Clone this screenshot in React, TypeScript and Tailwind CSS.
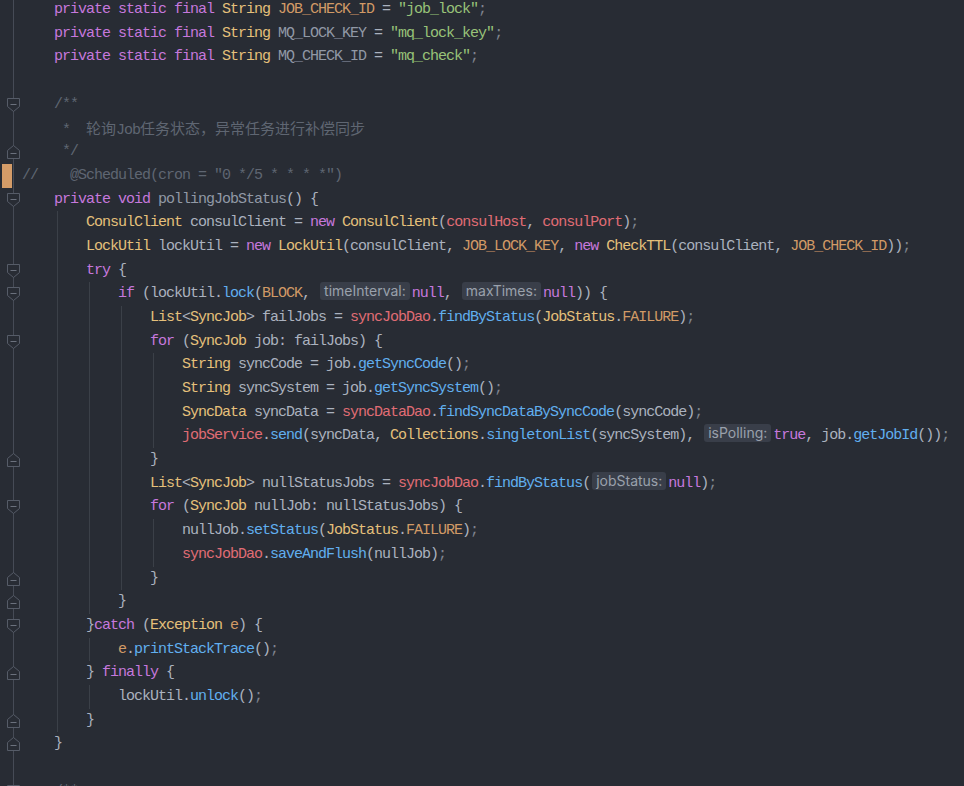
import React from "react";

type Tok = [string, string] | { hint: string } | { cjk: string };

interface Line {
    indent: number;
    body?: boolean;
    fold?: "start" | "end";
    mark?: boolean;
    toks: Tok[];
}

const kw = "text-[#c678dd]";
const ty = "text-[#e5c07b]";
const cn = "text-[#d19a66]";
const st = "text-[#98c379]";
const fd = "text-[#e06c75]";
const fn = "text-[#61afef]";
const tx = "text-[#abb2bf]";
const dm = "text-[#9199a6]";
const cm = "text-[#5f6672]";
const pu = "text-[#7f848e]";

const H = (hint: string): Tok => ({ hint });

const lines: Line[] = [
    { indent: 1, toks: [[kw, "private static final "], [ty, "String "], [cn, "JOB_CHECK_ID"], [tx, " = "], [st, '"job_lock"'], [pu, ";"]] },
    { indent: 1, toks: [[kw, "private static final "], [ty, "String "], [dm, "MQ_LOCK_KEY"], [tx, " = "], [st, '"mq_lock_key"'], [pu, ";"]] },
    { indent: 1, toks: [[kw, "private static final "], [ty, "String "], [dm, "MQ_CHECK_ID"], [tx, " = "], [st, '"mq_check"'], [pu, ";"]] },
    { indent: 0, toks: [] },
    { indent: 1, fold: "start", toks: [[cm, "/**"]] },
    { indent: 1, toks: [[cm, " *  "], { cjk: "轮询" }, [cm, "Job"], { cjk: "任务状态，异常任务进行补偿同步" }] },
    { indent: 1, fold: "end", toks: [[cm, " */"]] },
    { indent: 0, mark: true, toks: [[cm, '//    @Scheduled(cron = "0 */5 * * * *")']] },
    { indent: 1, fold: "start", toks: [[kw, "private void "], [dm, "pollingJobStatus"], [tx, "() {"]] },
    { indent: 2, body: true, toks: [[ty, "ConsulClient"], [tx, " consulClient = "], [kw, "new "], [ty, "ConsulClient"], [tx, "("], [fd, "consulHost"], [tx, ", "], [fd, "consulPort"], [tx, ")"], [pu, ";"]] },
    { indent: 2, body: true, toks: [[ty, "LockUtil"], [tx, " lockUtil = "], [kw, "new "], [ty, "LockUtil"], [tx, "(consulClient, "], [cn, "JOB_LOCK_KEY"], [tx, ", "], [kw, "new "], [ty, "CheckTTL"], [tx, "(consulClient, "], [cn, "JOB_CHECK_ID"], [tx, "))"], [pu, ";"]] },
    { indent: 2, body: true, fold: "start", toks: [[kw, "try"], [tx, " {"]] },
    { indent: 3, body: true, fold: "start", toks: [[kw, "if"], [tx, " (lockUtil."], [fn, "lock"], [tx, "("], [cn, "BLOCK"], [tx, ", "], H("timeInterval:"), [kw, "null"], [tx, ", "], H("maxTimes:"), [kw, "null"], [tx, ")) {"]] },
    { indent: 4, body: true, toks: [[ty, "List"], [tx, "<"], [ty, "SyncJob"], [tx, "> failJobs = "], [fd, "syncJobDao"], [tx, "."], [fn, "findByStatus"], [tx, "("], [ty, "JobStatus"], [tx, "."], [cn, "FAILURE"], [tx, ")"], [pu, ";"]] },
    { indent: 4, body: true, fold: "start", toks: [[kw, "for"], [tx, " ("], [ty, "SyncJob"], [tx, " job: failJobs) {"]] },
    { indent: 5, body: true, toks: [[ty, "String"], [tx, " syncCode = job."], [fn, "getSyncCode"], [tx, "()"], [pu, ";"]] },
    { indent: 5, body: true, toks: [[ty, "String"], [tx, " syncSystem = job."], [fn, "getSyncSystem"], [tx, "()"], [pu, ";"]] },
    { indent: 5, body: true, toks: [[ty, "SyncData"], [tx, " syncData = "], [fd, "syncDataDao"], [tx, "."], [fn, "findSyncDataBySyncCode"], [tx, "(syncCode)"], [pu, ";"]] },
    { indent: 5, body: true, toks: [[fd, "jobService"], [tx, "."], [fn, "send"], [tx, "(syncData, "], [ty, "Collections"], [tx, "."], [fn, "singletonList"], [tx, "(syncSystem), "], H("isPolling:"), [kw, "true"], [tx, ", job."], [fn, "getJobId"], [tx, "())"], [pu, ";"]] },
    { indent: 4, body: true, fold: "end", toks: [[tx, "}"]] },
    { indent: 4, body: true, toks: [[ty, "List"], [tx, "<"], [ty, "SyncJob"], [tx, "> nullStatusJobs = "], [fd, "syncJobDao"], [tx, "."], [fn, "findByStatus"], [tx, "("], H("jobStatus:"), [kw, "null"], [tx, ")"], [pu, ";"]] },
    { indent: 4, body: true, fold: "start", toks: [[kw, "for"], [tx, " ("], [ty, "SyncJob"], [tx, " nullJob: nullStatusJobs) {"]] },
    { indent: 5, body: true, toks: [[tx, "nullJob."], [fn, "setStatus"], [tx, "("], [ty, "JobStatus"], [tx, "."], [cn, "FAILURE"], [tx, ")"], [pu, ";"]] },
    { indent: 5, body: true, toks: [[fd, "syncJobDao"], [tx, "."], [fn, "saveAndFlush"], [tx, "(nullJob)"], [pu, ";"]] },
    { indent: 4, body: true, fold: "end", toks: [[tx, "}"]] },
    { indent: 3, body: true, fold: "end", toks: [[tx, "}"]] },
    { indent: 2, body: true, fold: "start", toks: [[tx, "}"], [kw, "catch"], [tx, " ("], [ty, "Exception"], [tx, " "], [cn, "e"], [tx, ") {"]] },
    { indent: 3, body: true, toks: [[cn, "e"], [tx, "."], [fn, "printStackTrace"], [tx, "()"], [pu, ";"]] },
    { indent: 2, body: true, fold: "end", toks: [[tx, "} "], [kw, "finally"], [tx, " {"]] },
    { indent: 3, body: true, toks: [[tx, "lockUtil."], [fn, "unlock"], [tx, "()"], [pu, ";"]] },
    { indent: 2, body: true, fold: "end", toks: [[tx, "}"]] },
    { indent: 1, fold: "end", toks: [[tx, "}"]] },
    { indent: 0, toks: [] },
    { indent: 1, fold: "start", toks: [[cm, "/**"]] },
];

const FoldIcon = ({ kind }: { kind: "start" | "end" }) => (
    <svg className="absolute left-[6px] top-[4px]" width="16" height="16" viewBox="0 0 16 16">
        {kind === "start" ? (
            <>
                <path d="M1.5 1.5H13.5V9.5L7.5 14.5L1.5 9.5Z" fill="#282c34" stroke="#565c68" />
                <path d="M4.5 7.5H10.5" stroke="#6b717d" />
            </>
        ) : (
            <>
                <path d="M1.5 14.5H13.5V6.5L7.5 1.5L1.5 6.5Z" fill="#282c34" stroke="#565c68" />
                <path d="M4.5 9.5H10.5" stroke="#6b717d" />
            </>
        )}
    </svg>
);

const CodeLine = ({ line }: { line: Line }) => (
    <div className="flex h-[23.7px]">
        <div className="relative w-[22px] shrink-0">
            <div className="absolute left-[13px] top-0 bottom-0 w-px bg-[#464b56]" />
            {line.mark && <div className="absolute left-[2px] top-0 bottom-0 w-[10px] bg-[#d49c68]" />}
            {line.fold && <FoldIcon kind={line.fold} />}
        </div>
        <div className="whitespace-pre font-['Liberation_Mono',monospace] text-[15px] leading-[23.7px] tracking-[-1px]">
            {Array.from({ length: line.indent }).map((_, k) => (
                <span key={k} className="inline-block h-[23.7px] w-[32px] pl-[3px] align-top">
                    {line.body && k >= 1 && <span className="block h-full w-px bg-[#3b4048]" />}
                </span>
            ))}
            {line.toks.map((t, i) => {
                if ("hint" in t)
                    return (
                        <span
                            key={i}
                            className="mx-[2px] inline-block rounded-[3px] bg-[#393e49] px-[4px] align-[1px] font-['Inter',sans-serif] text-[14px] leading-[18px] tracking-[0px] text-[#9aa1ac]">
                            {t.hint}
                        </span>
                    );
                if ("cjk" in t)
                    return (
                        <span key={i} className="font-['Noto_Sans_CJK_SC',sans-serif] text-[15px] tracking-[0px] text-[#5f6672]">
                            {t.cjk}
                        </span>
                    );
                return (
                    <span key={i} className={t[0]}>
                        {t[1]}
                    </span>
                );
            })}
        </div>
    </div>
);

export default function App() {
    return (
        <div className="h-[786px] w-[964px] overflow-hidden bg-[#282c34]">
            <div className="-mt-[2px]">
                {lines.map((l, i) => (
                    <CodeLine key={i} line={l} />
                ))}
            </div>
        </div>
    );
}
